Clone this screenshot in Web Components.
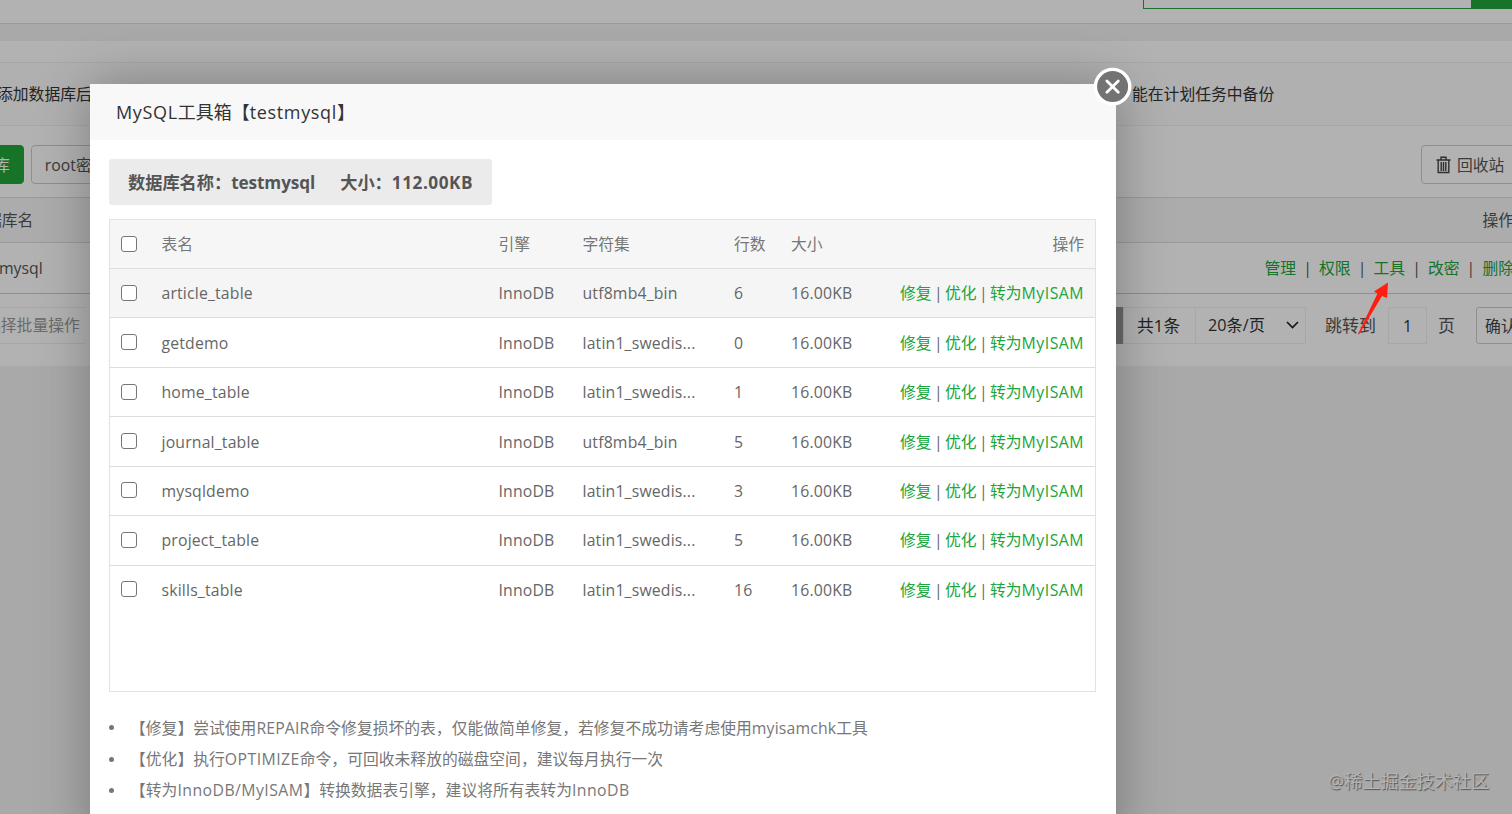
<!DOCTYPE html>
<html lang="zh-CN">
<head>
<meta charset="utf-8">
<title>MySQL工具箱</title>
<style>
  html, body { margin: 0; height: 100%; overflow: hidden; }
  body {
    font: 15.8px/20px "Open Sans", "Noto Sans CJK SC", sans-serif;
    color: #666;
    background: #f2f2f2;
  }
</style>
</head>
<body>
<db-page></db-page>
<modal-mask></modal-mask>
<tool-dialog>
  <span slot="title"><l-t>MySQL</l-t>工具箱【<l-t>testmysql</l-t>】</span>
  <db-summary slot="summary" name="testmysql" size="112.00KB"></db-summary>
  <db-tables slot="tables"></db-tables>
  <tip-line slot="tips">【修复】尝试使用<l-t>REPAIR</l-t>命令修复损坏的表，仅能做简单修复，若修复不成功请考虑使用<l-t>myisamchk</l-t>工具</tip-line>
  <tip-line slot="tips" wide>【优化】执行<l-t>OPTIMIZE</l-t>命令，可回收未释放的磁盘空间，建议每月执行一次</tip-line>
  <tip-line slot="tips" wide>【转为<l-t>InnoDB/MyISAM</l-t>】转换数据表引擎，建议将所有表转为<l-t>InnoDB</l-t></tip-line>
</tool-dialog>
<pointer-arrow></pointer-arrow>
<water-mark>@稀土掘金技术社区</water-mark>

<script>
function define(name, html, setup) {
  const template = document.createElement('template');
  // trimmed, so that inline elements get no spaces at their ends
  template.innerHTML = html.trim();
  customElements.define(name, class extends HTMLElement {
    constructor() {
      super();
      this.attachShadow({ mode: 'open' });
      this.shadowRoot.appendChild(template.content.cloneNode(true));
    }
    connectedCallback() {
      if (setup) setup(this, this.shadowRoot);
    }
  });
}

// Latin run inside Chinese text, with its own tracking
define('l-t', `
  <style>:host { display: inline; letter-spacing: var(--latin, 0.15px); }</style><slot></slot>
`);

define('check-box', `
  <style>
    :host {
      display: block; box-sizing: border-box; width: 16px; height: 16px; margin-top: -1px;
      border: 1.5px solid #767676; border-radius: 3px; background: #fff;
    }
  </style>
`);

define('db-page', `
  <style>
    :host { display: block; height: 366px; overflow: hidden; color: #555; white-space: nowrap; }
    .top {
      display: flex; justify-content: flex-end; height: 23px;
      background: #fff; border-bottom: 1px solid #ddd;
    }
    .search { display: flex; width: 369px; height: 9px; box-sizing: border-box; border: 1px solid #20a53a; border-top: 0; }
    .search i { margin-left: auto; width: 40px; background: #20a53a; }
    .panel { margin-top: 17px; background: #fff; height: 325px; }
    .row { display: flex; align-items: center; box-sizing: border-box; }
    .space { height: 21px; }
    .notice { height: 64px; border: solid #efefef; border-width: 1px 0; background: #fcfcfc; color: #333; }
    .notice span:first-child { margin-left: -3px; width: 1135px; }
    .buttons { height: 71px; justify-content: space-between; padding-top: 6px; }
    .left { display: flex; gap: 7px; }
    .btn {
      display: flex; align-items: center; height: 39px; box-sizing: border-box;
      border: 1px solid #ccc; border-radius: 4px; padding: 0 13px;
    }
    .green { background: #20a53a; border-color: #20a53a; color: #fff; padding: 0 13px 0 0; margin-left: -7px; }
    .recycle { width: 110px; gap: 6px; padding: 0 14px; margin-right: -19px; }
    .head { height: 46px; border: solid #ddd; border-width: 1px 0; background: #f7f7f7; justify-content: space-between; }
    .head span:first-child { margin-left: -14px; }
    .item { height: 51px; border-bottom: 1px solid #ccc; justify-content: space-between; }
    .item > span { margin-left: -1px; }
    .links { display: flex; gap: 7.1px; margin-right: -2px; }
    .links a { color: #20a53a; }
    .cut { margin-right: -2px; }
    .pager { height: 62px; }
    .batch { flex: none; width: 100px; height: 37px; display: flex; align-items: center; border: solid #eee; border-width: 1px 0; box-sizing: border-box; margin-left: -15px; color: #999; }
    .nums { display: flex; align-items: center; margin-left: 1029px; height: 37px; color: #333; }
    .nums > * { flex: none; box-sizing: border-box; height: 37px; display: flex; align-items: center; border: 1px solid #f0f0f0; padding-top: 1px; }
    .nums > .cur { width: 9px; background: #999; border: 0; }
    .nums > .total { width: 72px; padding-left: 13px; border-right: 0; font-size: 16.8px; }
    .per { width: 111px; justify-content: space-between; padding: 0 6px 0 12px; font-size: 16.2px; }
    .nums > .jump { border: 0; padding-left: 19px; width: 82px; color: #555; font-size: 17px; }
    .num { width: 39px; justify-content: center; }
    .nums > .unit { border: 0; width: 49px; padding-left: 11px; color: #555; font-size: 17px; }
    .nums > .ok { width: 60px; border-color: #ccc; padding-left: 8px; border-radius: 3px; color: #444; }
  </style>
  <div class="top"><div class="search"><i></i></div></div>
  <div class="panel">
    <div class="space"></div>
    <div class="row notice"><span>添加数据库后</span><span>能在计划任务中备份</span></div>
    <div class="row buttons">
      <div class="left"><div class="btn green">库</div><div class="btn">root密</div></div>
      <div class="btn recycle">
        <svg width="15" height="18" viewBox="0 0 15 18" fill="none" stroke="#444" stroke-width="1.4">
          <path d="M.5 4h14M5 4V1.2h5V4M2.2 4v12.5h10.6V4M5.2 6v9M7.5 6v9M9.8 6v9"/>
        </svg>
        <span>回收站</span>
      </div>
    </div>
    <div class="row head"><span>据库名</span><span class="cut">操作</span></div>
    <div class="row item">
      <span>mysql</span>
      <div class="links"><a>管理</a>|<a>权限</a>|<a>工具</a>|<a>改密</a>|<a>删除</a></div>
    </div>
    <div class="row pager">
      <div class="batch">选择批量操作</div>
      <div class="nums">
        <span class="cur"></span>
        <span class="total">共1条</span>
        <span class="per">20条/页
          <svg width="13" height="8" viewBox="0 0 13 8" fill="none" stroke="#222" stroke-width="1.7"><path d="M1 1l5.5 5.5L12 1"/></svg>
        </span>
        <span class="jump">跳转到</span>
        <span class="num">1</span>
        <span class="unit">页</span>
        <span class="ok">确认</span>
      </div>
    </div>
  </div>
`);

define('modal-mask', `
  <style>:host { display: block; position: absolute; inset: 0; background: rgba(0, 0, 0, .3); }</style>
`);

define('tool-dialog', `
  <style>
    :host {
      display: block; position: absolute; left: 90px; top: 84px;
      width: 1026px; height: 760px; background: #fff;
      box-shadow: 1px 1px 50px rgba(0, 0, 0, .3);
    }
    header {
      display: flex; align-items: center; height: 56px; padding-left: 26px;
      background: #f8f8f8; color: #333; font-size: 18px; --latin: 0.65px;
    }
    .body { display: flex; flex-direction: column; align-items: flex-start; padding: 19px 20px 0 19px; }
    .tables { align-self: stretch; margin: 14px 0 20px; }
    .close { position: absolute; right: -17px; top: -17px; display: block; }
  </style>
  <header><slot name="title"></slot></header>
  <div class="body">
    <slot name="summary"></slot>
    <div class="tables"><slot name="tables"></slot></div>
    <slot name="tips"></slot>
  </div>
  <svg class="close" width="40" height="40" viewBox="0 0 40 40">
    <circle cx="19.6" cy="19.6" r="17.2" fill="#737373" stroke="#fff" stroke-width="3.4"/>
    <path d="M13.9 13.9l11.4 11.4M25.3 13.9L13.9 25.3" stroke="#fff" stroke-width="2.8" stroke-linecap="round"/>
  </svg>
`);

define('db-summary', `
  <style>
    :host {
      display: flex; align-items: center; gap: 25px; box-sizing: border-box; width: 383px; height: 46px;
      padding: 1px 0 0 19px; background: #ebebeb; border-radius: 3px;
      font-size: 17.2px; font-weight: 700; color: #555; white-space: nowrap; --latin: -0.1px;
    }
    .size { --latin: 0.55px; }
  </style>
  <span>数据库名称：<l-t class="name"></l-t></span>
  <span>大小：<l-t class="size"></l-t></span>
`, (host, root) => {
  root.querySelector('.name').textContent = host.getAttribute('name');
  root.querySelector('.size').textContent = host.getAttribute('size');
});

define('table-row', `
  <style>
    :host {
      display: grid; grid-template-columns: 40.5px 337px 84px 151.5px 57px 90px 1fr;
      align-items: center; box-sizing: border-box; height: 49.45px; padding: 0 11px 0 11px;
      border-bottom: 1px solid #ddd; white-space: nowrap; letter-spacing: var(--latin, 0.17px);
    }
    :host([head]) { background: #f6f6f6; height: 49px; letter-spacing: 0; color: #777; }
    :host([hover]) { background: #f5f5f5; }
    :host([last]) { border-bottom: 0; height: 48.5px; }
    .ops { text-align: right; letter-spacing: 0; word-spacing: -1.75px; --latin: 0.5px; }
    ::slotted(a) { color: #20a53a; }
  </style>
  <check-box></check-box>
  <slot name="name"></slot>
  <slot name="engine"></slot>
  <slot name="charset"></slot>
  <slot name="rows"></slot>
  <slot name="size"></slot>
  <div class="ops"><slot></slot></div>
`);

define('db-tables', `
  <style>
    :host { display: block; box-sizing: border-box; height: 473px; border: 1px solid #e2e2e2; }
  </style>
`, (host, root) => {
  const cells = ['name', 'engine', 'charset', 'rows', 'size'];
  const addRow = (values, ops, flag) => {
    const row = document.createElement('table-row');
    if (flag) row.setAttribute(flag, '');
    row.innerHTML = cells.map((c, i) => `<span slot="${c}">${values[i]}</span>`).join('') + ops;
    root.appendChild(row);
  };
  const ops = '<a>修复</a> | <a>优化</a> | <a>转为<l-t>MyISAM</l-t></a>';
  const tables = [
    ['article_table', 'utf8mb4_bin', 6],
    ['getdemo', 'latin1_swedis...', 0],
    ['home_table', 'latin1_swedis...', 1],
    ['journal_table', 'utf8mb4_bin', 5],
    ['mysqldemo', 'latin1_swedis...', 3],
    ['project_table', 'latin1_swedis...', 5],
    ['skills_table', 'latin1_swedis...', 16]
  ];
  addRow(['表名', '引擎', '字符集', '行数', '大小'], '操作', 'head');
  tables.forEach(([name, charset, rows], i) => {
    const flag = i === 0 ? 'hover' : i === tables.length - 1 ? 'last' : '';
    addRow([name, 'InnoDB', charset, rows, '16.00KB'], ops, flag);
  });
});

define('tip-line', `
  <style>
    :host { display: flex; align-items: center; height: 31.4px; color: #777; white-space: nowrap; }
    :host([wide]) { --latin: 0.45px; }
    i { width: 5px; height: 5px; margin-right: 16px; border-radius: 50%; background: #777; }
  </style>
  <i></i><span><slot></slot></span>
`);

define('pointer-arrow', `
  <style>:host { display: block; position: absolute; left: 1356px; top: 281px; } svg { display: block; }</style>
  <svg width="36" height="56" viewBox="0 0 36 56"><path d="M32 1.5L31 17l-5-2L3 53.5l-1-.5L21.5 12.5 18 10.500z" fill="#ff1e10"/></svg>
`);

define('water-mark', `
  <style>
    :host {
      display: block; position: absolute; right: 23px; bottom: 20px; font-size: 18.1px; line-height: 26px;
      color: #b4b4b4; text-shadow: 1px 1px 1px #555;
    }
  </style>
  <slot></slot>
`);
</script>
</body>
</html>
